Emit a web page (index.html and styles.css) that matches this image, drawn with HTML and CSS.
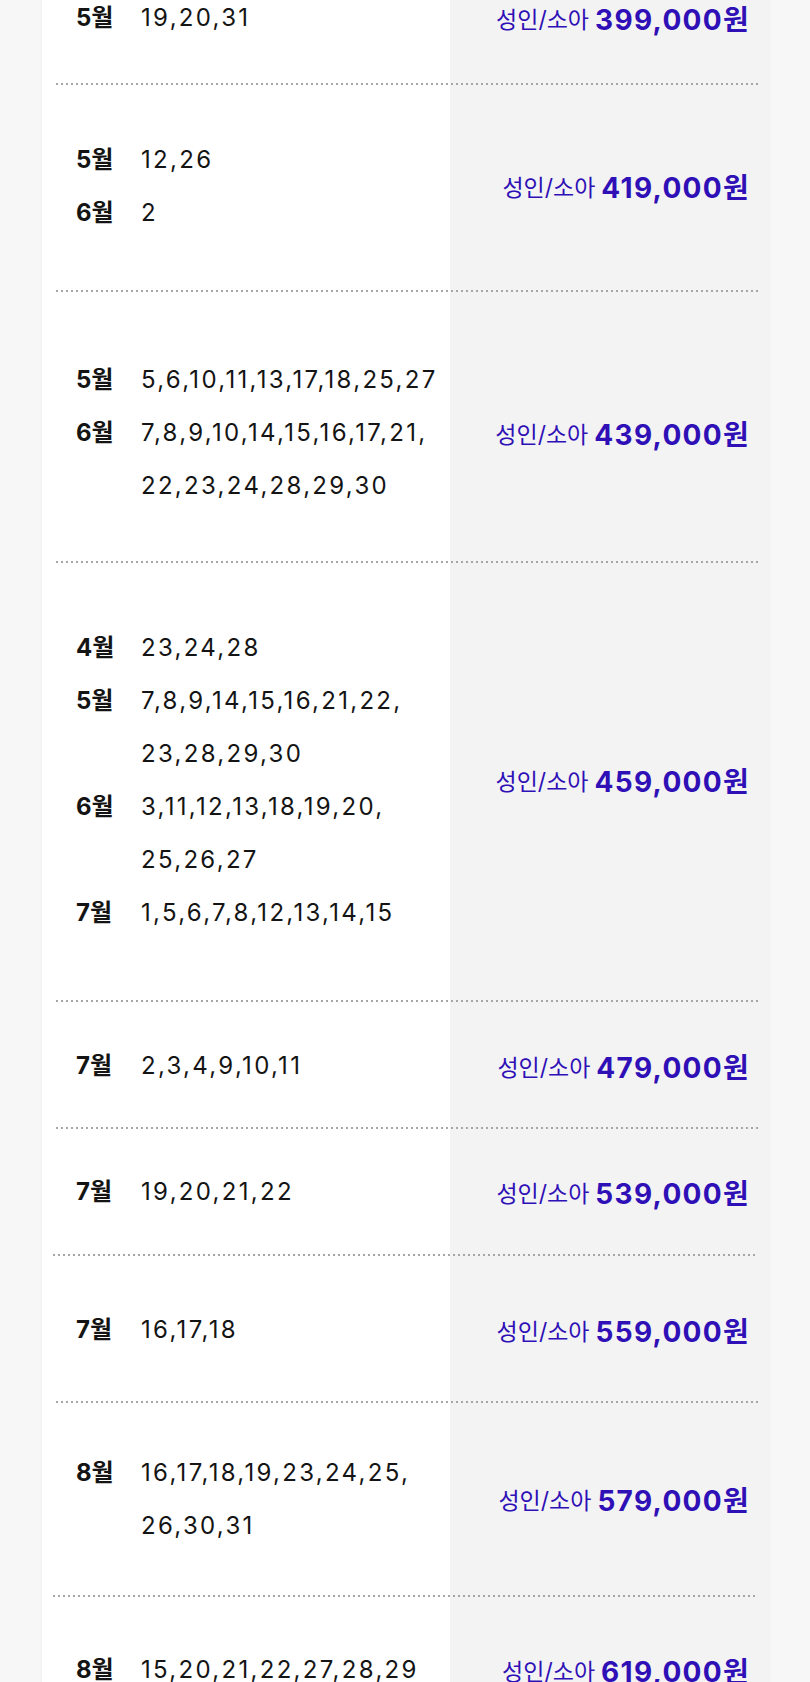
FILE: index.html
```html
<!DOCTYPE html>
<html lang="ko">
<head>
  <meta charset="UTF-8" />
  <meta name="viewport" content="width=device-width, initial-scale=1" />
  <title>출발일별 요금표</title>
  <link rel="stylesheet" href="styles.css">
</head>
<body>
  <main class="price-table" aria-label="출발일별 요금">
    <section class="row">
      <div class="dates">
        <span class="month">5월</span><span class="days">19,20,31</span>
      </div>
      <div class="price"><span class="label">성인/소아</span> <strong>399,000원</strong></div>
    </section>
    <div class="divider"></div>

    <section class="row">
      <div class="dates">
        <span class="month">5월</span><span class="days">12,26</span>
        <span class="month">6월</span><span class="days">2</span>
      </div>
      <div class="price"><span class="label">성인/소아</span> <strong>419,000원</strong></div>
    </section>
    <div class="divider"></div>

    <section class="row">
      <div class="dates">
        <span class="month">5월</span><span class="days">5,6,10,11,13,17,18,25,27</span>
        <span class="month">6월</span><span class="days">7,8,9,10,14,15,16,17,21,<br>22,23,24,28,29,30</span>
      </div>
      <div class="price"><span class="label">성인/소아</span> <strong>439,000원</strong></div>
    </section>
    <div class="divider"></div>

    <section class="row">
      <div class="dates">
        <span class="month">4월</span><span class="days">23,24,28</span>
        <span class="month">5월</span><span class="days">7,8,9,14,15,16,21,22,<br>23,28,29,30</span>
        <span class="month">6월</span><span class="days">3,11,12,13,18,19,20,<br>25,26,27</span>
        <span class="month">7월</span><span class="days">1,5,6,7,8,12,13,14,15</span>
      </div>
      <div class="price"><span class="label">성인/소아</span> <strong>459,000원</strong></div>
    </section>
    <div class="divider"></div>

    <section class="row">
      <div class="dates">
        <span class="month">7월</span><span class="days">2,3,4,9,10,11</span>
      </div>
      <div class="price"><span class="label">성인/소아</span> <strong>479,000원</strong></div>
    </section>
    <div class="divider"></div>

    <section class="row">
      <div class="dates">
        <span class="month">7월</span><span class="days">19,20,21,22</span>
      </div>
      <div class="price"><span class="label">성인/소아</span> <strong>539,000원</strong></div>
    </section>
    <div class="divider shifted"></div>

    <section class="row">
      <div class="dates">
        <span class="month">7월</span><span class="days">16,17,18</span>
      </div>
      <div class="price"><span class="label">성인/소아</span> <strong>559,000원</strong></div>
    </section>
    <div class="divider"></div>

    <section class="row">
      <div class="dates">
        <span class="month">8월</span><span class="days">16,17,18,19,23,24,25,<br>26,30,31</span>
      </div>
      <div class="price"><span class="label">성인/소아</span> <strong>579,000원</strong></div>
    </section>
    <div class="divider shifted"></div>

    <section class="row">
      <div class="dates">
        <span class="month">8월</span><span class="days">15,20,21,22,27,28,29</span>
      </div>
      <div class="price"><span class="label">성인/소아</span> <strong>619,000원</strong></div>
    </section>
  </main>
</body>
</html>
```

FILE: styles.css
```css
:root {
  --page-bg: #f7f7f7;
  --card-bg: #ffffff;
  --price-bg: #f3f3f4;
  --text: #141414;
  --accent: #2f10b6;
  --dot: #a6a6a6;
  --line: 53px;
}

* {
  box-sizing: border-box;
}

body {
  margin: 0;
  background: var(--page-bg);
  color: var(--text);
  font-family: Inter, "Noto Sans CJK KR", sans-serif;
  overflow: hidden;
}

.price-table {
  width: 727px;
  margin: -27px 0 0 42px;
  background: linear-gradient(to right, var(--card-bg) 408px, var(--price-bg) 408px);
  box-shadow: 0 0 3px rgba(0, 0, 0, 0.05);
}

.row {
  display: grid;
  grid-template-columns: 408px 1fr;
}

.dates {
  display: grid;
  grid-template-columns: 65px auto;
  align-content: start;
  padding-left: 34px;
  line-height: var(--line);
}

.month {
  font-size: 24px;
  font-weight: 700;
}

.days {
  font-size: 24px;
  letter-spacing: 2.3px;
}

.price {
  display: flex;
  align-items: center;
  justify-content: flex-end;
  gap: 6px;
  padding-right: 19px;
  color: var(--accent);
  white-space: nowrap;
}

.price .label {
  font-size: 23px;
}

.price strong {
  font-size: 28px;
  font-weight: 700;
  letter-spacing: 1.3px;
}

.divider {
  height: 2px;
  margin: 0 9px 0 14px;
  background: repeating-linear-gradient(to right, var(--dot) 0 2px, transparent 2px 5px);
}

.divider.shifted {
  margin: 0 12px 0 11px;
}

/* each block has its own spacing in the source sheet */
.row:nth-of-type(1) { padding: 18px 0 39px; }
.row:nth-of-type(2) { padding: 48px 0 51px; }
.row:nth-of-type(3) { padding: 61px 0 49px; }
.row:nth-of-type(4) { padding: 58px 0 61px; }
.row:nth-of-type(5) { padding: 37px 0 35px; }
.row:nth-of-type(6) { padding: 36px 0 36px; }
.row:nth-of-type(7) { padding: 47px 0 45px; }
.row:nth-of-type(8) { padding: 43px 0 43px; }
.row:nth-of-type(9) { padding: 46px 0 60px; }
```
